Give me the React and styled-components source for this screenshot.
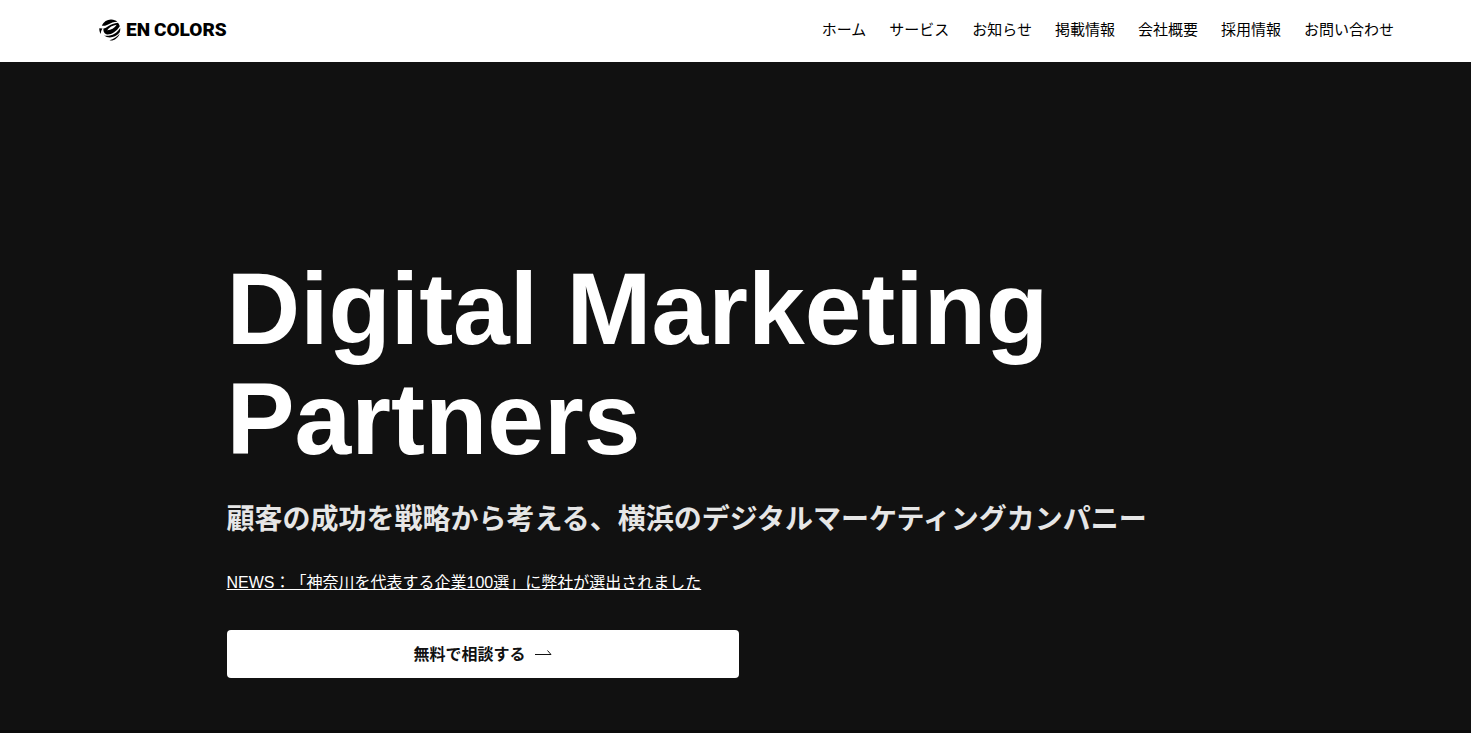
import React from 'react';

import styled, { createGlobalStyle } from 'styled-components';

const GlobalStyle = createGlobalStyle`
    *,
    *::before,
    *::after {
        box-sizing: border-box;
    }

    body {
        margin: 0;
        background: #0a0a0a;
        color: #000;
        font-family: "Liberation Sans", "Noto Sans CJK JP", sans-serif;
        font-size: 16px;
        line-height: 24px;
        text-spacing-trim: space-all;
    }

    a {
        color: inherit;
    }
`;

const Page = styled.div`
    display: flex;
    flex-direction: column;
    min-height: 100vh;
`;

const Header = styled.header`
    display: flex;
    align-items: center;
    justify-content: space-between;
    padding: 18px 77px 20px 99px;
    background: #fff;
`;

const Logo = styled.a`
    display: flex;
    align-items: center;
    gap: 5px;
    text-decoration: none;
`;

const LogoMark = styled.svg`
    display: block;
    width: 22px;
    height: 22px;
`;

const LogoName = styled.span`
    display: flex;
    gap: 4px;
    font-family: Roboto, sans-serif;
    font-size: 19px;
    font-weight: 900;
`;

const NavList = styled.ul`
    display: flex;
    gap: 23px;
    margin: 0;
    padding: 0;
    list-style: none;
`;

const NavLink = styled.a`
    font-size: 15px;
    text-decoration: none;

    &:hover {
        text-decoration: underline;
    }
`;

const Hero = styled.main`
    flex: 1;
    padding: 192px 24px 51px;
    margin-bottom: 3px;
    background: #111;
    color: #fff;
`;

const HeroInner = styled.div`
    max-width: 1018px;
    margin: 0 auto;
`;

const Title = styled.h1`
    margin: 0;
    font-size: 102px;
    font-weight: 700;
    line-height: 110px;
`;

const Lead = styled.p`
    margin: 26px 0 0;
    color: #e6e6e6;
    font-size: 28px;
    font-weight: 700;
    line-height: 40px;
`;

const News = styled.p`
    margin: 31px 0 0;
`;

const Button = styled.button`
    display: flex;
    align-items: center;
    justify-content: center;
    gap: 8px;
    width: 100%;
    max-width: 512px;
    height: 48px;
    margin-top: 35px;
    padding: 0 16px 3px;
    border: 0;
    border-radius: 4px;
    background: #fff;
    color: #111;
    font-family: inherit;
    font-size: 16px;
    font-weight: 700;
    cursor: pointer;
`;

const ArrowIcon = styled.svg`
    display: block;
    width: 18px;
    height: 8px;
`;

const links = [
    'ホーム',
    'サービス',
    'お知らせ',
    '掲載情報',
    '会社概要',
    '採用情報',
    'お問い合わせ'
];

const Mark = () => (
    <LogoMark viewBox="0 0 22 22" aria-hidden="true">
        <path d="M2.800 6.600C4.800 2.400 8.500.3 12.300.5c2.500.1 4.500.9 6 2.200-3.700.1-6.300 1.100-9.200 2.800C6.800 6.800 4.900 7.100 2.800 6.600z" />
        <path d="M4.400 9.500C7.800 9.300 11 4.300 19 3.700c.9 1.100 1.500 2.300 1.800 3.500C17.500 12.400 12.500 15.600 8.300 15.400 5.500 15.200 4.200 12.500 4.400 9.500zM8.200 11.200c3.700.1 7.300-2.200 9.500-5.500-4 .5-7.600 2.400-9.500 5.500z" fillRule="evenodd" />
        <path d="M5 16.600c7 1.100 12.600-2 16.200-7.700.2 1.900-.1 3.500-.8 4.900-4 4.800-10.700 6.200-15.400 2.800z" />
        <path d="M.3 9.200l3.200.4c-1.100 1.600-1.700 3.400-1.800 5.400C.7 13.200.2 11.200.3 9.200z" />
        <path d="M10.500 21.300c4-1.100 7.400-3.400 10.100-6.600-1.300 3.900-5 6.800-8.600 6.900z" />
    </LogoMark>
);

const Arrow = () => (
    <ArrowIcon viewBox="0 0 18 8" fill="none" stroke="currentColor" aria-hidden="true">
        <path d="M1 5.500h16L13.500 1.500" />
    </ArrowIcon>
);

const App = () => (
    <Page>
        <GlobalStyle />
        <Header>
            <Logo href="#">
                <Mark />
                <LogoName>
                    <span>EN</span>
                    <span>COLORS</span>
                </LogoName>
            </Logo>
            <nav>
                <NavList>
                    {links.map(label => (
                        <li key={label}>
                            <NavLink href="#">{label}</NavLink>
                        </li>
                    ))}
                </NavList>
            </nav>
        </Header>
        <Hero>
            <HeroInner>
                <Title>Digital Marketing Partners</Title>
                <Lead>顧客の成功を戦略から考える、横浜のデジタルマーケティングカンパニー</Lead>
                <News>
                    <a href="#">NEWS：「神奈川を代表する企業100選」に弊社が選出されました</a>
                </News>
                <Button type="button">
                    無料で相談する
                    <Arrow />
                </Button>
            </HeroInner>
        </Hero>
    </Page>
);

export default App;
